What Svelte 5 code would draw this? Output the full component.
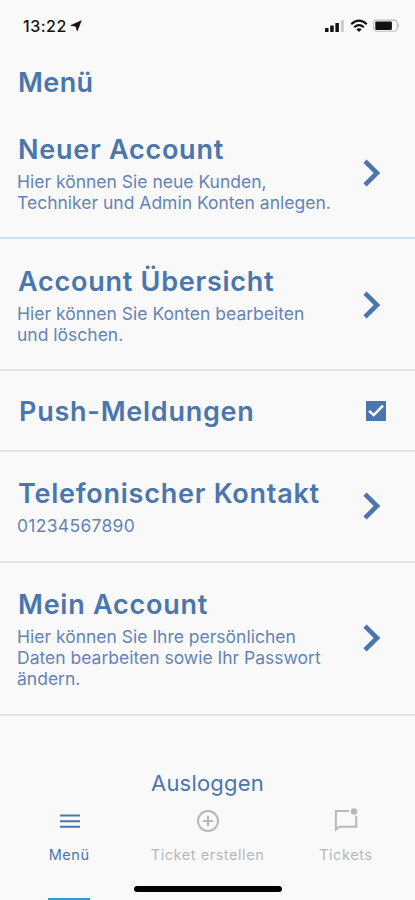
<script>
    let push = true;
    let active = "menu";

    const accountRows = [
        { title: "Neuer Account", lines: ["Hier können Sie neue Kunden,", "Techniker und Admin Konten anlegen."] },
        { title: "Account Übersicht", lines: ["Hier können Sie Konten bearbeiten", "und löschen."] }
    ];
    const contactRows = [
        { title: "Telefonischer Kontakt", lines: ["01234567890"], number: true },
        { title: "Mein Account", lines: ["Hier können Sie Ihre persönlichen", "Daten bearbeiten sowie Ihr Passwort", "ändern."] }
    ];
    const tabs = [
        { id: "menu", label: "Menü" },
        { id: "create", label: "Ticket erstellen" },
        { id: "tickets", label: "Tickets" }
    ];
</script>

{#snippet row(item, contact)}
    <button class="row" class:contact>
        <span class="text">
            <span class="title">{item.title}</span>
            <span class="desc" class:number={item.number}>
                {#each item.lines as line}
                    <span class="line">{line}</span>
                {/each}
            </span>
        </span>
        <svg class="chevron" width="18" height="28" viewBox="0 0 18 28">
            <path d="M2 2.2 L14 14 L2 25.8" fill="none" stroke="currentColor" stroke-width="4.6" />
        </svg>
    </button>
{/snippet}

<div class="screen">
    <div class="status">
        <span class="time">13:22</span>
        <svg class="location" width="12" height="12" viewBox="0 0 12 12">
            <path d="M11.3 .7 L7.2 11 L5.8 6.3 L.7 5.4 Z" fill="#111" stroke="#111" stroke-width=".6" />
        </svg>
        <div class="indicators">
            <svg width="20" height="14" viewBox="0 0 20 14">
                <rect x="0" y="9" width="3.5" height="4" rx=".6" />
                <rect x="5.2" y="6.5" width="3.5" height="6.5" rx=".6" />
                <rect x="10.4" y="4" width="3.5" height="9" rx=".6" />
                <rect x="15.8" y="1" width="3.2" height="12" rx=".6" fill="#cfcfcf" />
            </svg>
            <svg width="18" height="14" viewBox="0 0 18 14">
                <g fill="none" stroke="#111" stroke-width="2.2">
                    <path d="M1.2 5.2 Q9 -1.9 16.8 5.2" />
                    <path d="M4.2 8.3 Q9 4 13.8 8.3" />
                </g>
                <path d="M6.3 10.3 Q9 8.3 11.7 10.3 L9 13 Z" />
            </svg>
            <svg width="27" height="14" viewBox="0 0 27 14">
                <rect x=".6" y="1.1" width="23.6" height="11.2" rx="3.2" fill="none" stroke="#bdbdbd" stroke-width="1.1" />
                <rect x="2.3" y="2.6" width="16.6" height="8.4" rx="1.2" />
                <path d="M25.2 4.6 Q27.2 6.8 25.2 9 Z" fill="#aaa" />
            </svg>
        </div>
    </div>

    <h1>Menü</h1>

    <div class="list">
        {#each accountRows as item}
            {@render row(item, false)}
        {/each}
        <label class="row push">
            <span class="title">Push-Meldungen</span>
            <input type="checkbox" bind:checked={push}>
            <svg class="check" width="20" height="20" viewBox="0 0 20 20">
                <rect width="20" height="20" rx=".8" fill="currentColor" />
                {#if push}
                    <path d="M3 9.8 L7.7 14 L17 4.6" fill="none" stroke="#fff" stroke-width="2.4" />
                {/if}
            </svg>
        </label>
        {#each contactRows as item}
            {@render row(item, true)}
        {/each}
    </div>

    <button class="logout">Ausloggen</button>

    <nav>
        {#each tabs as tab}
            <button class="tab" class:active={active === tab.id} on:click={() => active = tab.id}>
                <svg width="28" height="28" viewBox="0 0 28 28" fill="none" stroke="currentColor" stroke-width="2">
                    {#if tab.id === "menu"}
                        <path d="M4 8.6 H24 M4 14.2 H24 M4 19.8 H24" />
                    {:else if tab.id === "create"}
                        <circle cx="14" cy="14" r="10" />
                        <path d="M14 8.8 V19.2 M8.8 14 H19.2" />
                    {:else}
                        <path d="M17 4 H3.9 V22.6 L7.3 19.8 H24.2 V8.8" />
                        <circle cx="22" cy="4.5" r="3.2" fill="currentColor" stroke="none" />
                    {/if}
                </svg>
                <span>{tab.label}</span>
            </button>
        {/each}
    </nav>

    <div class="bottom">
        <div class="marker"></div>
        <div class="home"></div>
    </div>
</div>

<style>
:global(body){
    margin: 0;
    background-color: #f9f9f9;
}
.screen{
    display: flex;
    flex-direction: column;
    width: 415px;
    height: 900px;
    overflow: hidden;
    background-color: #f9f9f9;
    color: #4a76ad;
    font-family: Inter, "Liberation Sans", sans-serif;
}
button{
    border: none;
    background: none;
    padding: 0;
    color: inherit;
    font-family: inherit;
    cursor: pointer;
}
.status{
    display: flex;
    align-items: center;
    height: 52px;
    padding: 0 15px 0 23px;
    color: #111;
}
.time{
    font-size: 16px;
    font-weight: 500;
    letter-spacing: 0.5px;
}
.location{
    margin-left: 3px;
}
.indicators{
    display: flex;
    gap: 5px;
    margin-left: auto;
}
.indicators svg{
    fill: #111;
}
h1{
    margin: 0;
    height: 55px;
    padding-left: 18px;
    font-size: 27px;
    font-weight: 600;
    line-height: 62px;
    letter-spacing: 0.4px;
}
.row{
    display: flex;
    align-items: center;
    justify-content: space-between;
    box-sizing: border-box;
    width: 100%;
    padding: 26px 34px 24px 18px;
    border-bottom: 2px solid #e0e4e7;
    text-align: left;
}
.row:first-child{
    border-bottom-color: #d3dfe9;
}
.row.contact{
    padding-top: 25px;
    padding-bottom: 25px;
}
.contact .chevron{
    margin-bottom: 2px;
}
.text{
    display: flex;
    flex-direction: column;
    gap: 4px;
}
.title{
    font-size: 27px;
    font-weight: 600;
    line-height: 34px;
    letter-spacing: 0.75px;
    white-space: nowrap;
}
.desc{
    margin-left: -1px;
    font-size: 17.5px;
    line-height: 21px;
    letter-spacing: 0;
    color: #6484b7;
}
.number{
    letter-spacing: 0.3px;
}
.line{
    display: block;
    white-space: nowrap;
}
.push{
    height: 81px;
    padding: 3px 29px 0 19px;
    cursor: pointer;
}
.push input{
    position: absolute;
    opacity: 0;
}
.check{
    margin-bottom: 2px;
}
.logout{
    align-self: center;
    margin-top: 51px;
    font-size: 22px;
    line-height: 32px;
    letter-spacing: 0.2px;
}
nav{
    display: grid;
    grid-template-columns: repeat(3, 1fr);
    margin-top: 8px;
}
.tab{
    display: flex;
    flex-direction: column;
    align-items: center;
    gap: 10px;
    color: #b8b8b8;
    font-size: 14.5px;
    line-height: 20px;
    letter-spacing: 0.55px;
}
.tab svg{
    margin-left: 1px;
}
.tab.active{
    color: #4a76ad;
}
.bottom{
    display: grid;
    grid-template-columns: repeat(3, 1fr);
    justify-items: center;
    flex: 1;
}
.marker{
    align-self: end;
    width: 42px;
    height: 2px;
    background-color: #2d97da;
}
.home{
    align-self: end;
    width: 148px;
    height: 6px;
    margin: 0 -10px 8px -9px;
    border-radius: 3px;
    background-color: #000;
}
</style>
